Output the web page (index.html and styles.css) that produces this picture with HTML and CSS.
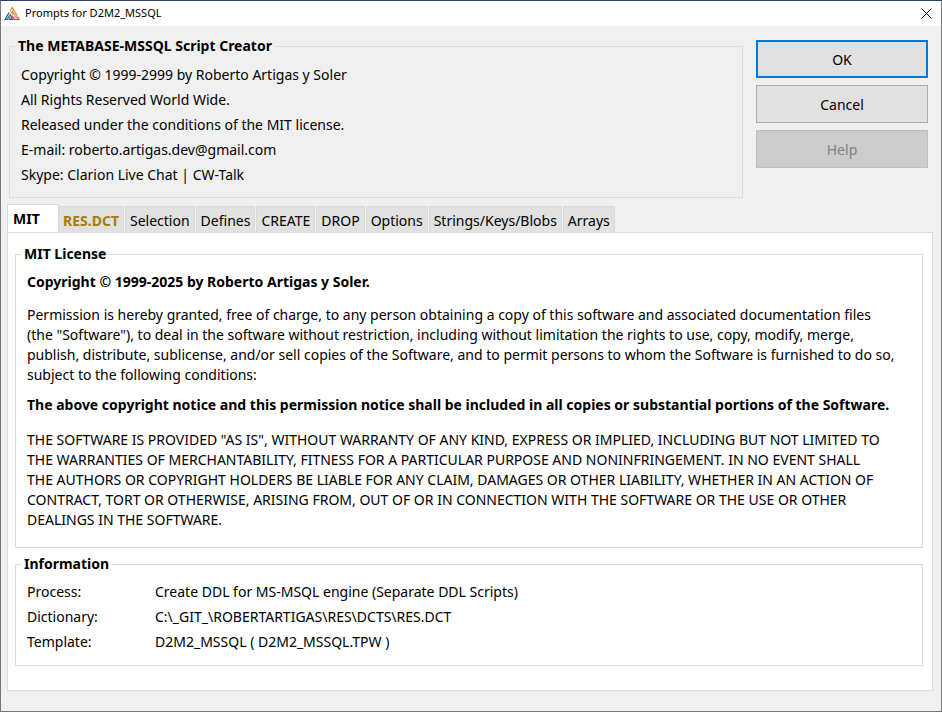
FILE: index.html
```html
<!DOCTYPE html>
<html lang="en">
<head>
<meta charset="utf-8">
<title>Prompts for D2M2_MSSQL</title>
<link rel="stylesheet" href="styles.css">
</head>
<body>
<div class="window">
  <header class="titlebar">
    <svg class="logo" viewBox="0 0 16 16" aria-hidden="true">
      <path class="logo-orange" d="M6 5.2 8.2 1.5 12.8 9H10.6L8.4 5.2 7.2 7.2M8 7.6H9.4"/>
      <path class="logo-blue" d="M5.2 6.4 1 13.4H3.2L5.6 9.2M6 8 8.6 13.4H5.2L6.2 11.2"/>
      <path class="logo-red" d="M8.2 9.6 10.2 13.4H15L13.6 11H10.4"/>
    </svg>
    <h1 class="title">Prompts for D2M2_MSSQL</h1>
    <button class="close" type="button" aria-label="Close">
      <svg class="close-icon" viewBox="0 0 11 11" aria-hidden="true"><path d="M.5.5 10.5 10.5M10.5.5.5 10.5"/></svg>
    </button>
  </header>
  <main class="body">
    <div class="top">
      <fieldset class="group about">
        <legend>The METABASE-MSSQL Script Creator</legend>
        <p>Copyright © 1999-2999 by Roberto Artigas y Soler</p>
        <p>All Rights Reserved World Wide.</p>
        <p>Released under the conditions of the MIT license.</p>
        <p>E-mail: roberto.artigas.dev@gmail.com</p>
        <p>Skype: Clarion Live Chat | CW-Talk</p>
      </fieldset>
      <div class="actions">
        <button class="action primary" type="button">OK</button>
        <button class="action" type="button">Cancel</button>
        <button class="action" type="button" disabled>Help</button>
      </div>
    </div>
    <div class="tabs" role="tablist">
      <button class="tab active" id="tab-mit" type="button" role="tab" aria-selected="true" aria-controls="panel-mit">MIT</button>
      <button class="tab marked" type="button" role="tab" aria-selected="false">RES.DCT</button>
      <button class="tab" type="button" role="tab" aria-selected="false">Selection</button>
      <button class="tab" type="button" role="tab" aria-selected="false">Defines</button>
      <button class="tab" type="button" role="tab" aria-selected="false">CREATE</button>
      <button class="tab" type="button" role="tab" aria-selected="false">DROP</button>
      <button class="tab" type="button" role="tab" aria-selected="false">Options</button>
      <button class="tab" type="button" role="tab" aria-selected="false">Strings/Keys/Blobs</button>
      <button class="tab" type="button" role="tab" aria-selected="false">Arrays</button>
    </div>
    <section class="panel" id="panel-mit" role="tabpanel" aria-labelledby="tab-mit">
      <fieldset class="group license">
        <legend>MIT License</legend>
        <p class="strong">Copyright © 1999-2025 by Roberto Artigas y Soler.</p>
        <p>Permission is hereby granted, free of charge, to any person obtaining a copy of this software and associated documentation files<br>
        (the "Software"), to deal in the software without restriction, including without limitation the rights to use, copy, modify, merge,<br>
        publish, distribute, sublicense, and/or sell copies of the Software, and to permit persons to whom the Software is furnished to do so,<br>
        subject to the following conditions:</p>
        <p class="strong notice">The above copyright notice and this permission notice shall be included in all copies or substantial portions of the Software.</p>
        <p>THE SOFTWARE IS PROVIDED "AS IS", WITHOUT WARRANTY OF ANY KIND, EXPRESS OR IMPLIED, INCLUDING BUT NOT LIMITED TO<br>
        THE WARRANTIES OF MERCHANTABILITY, FITNESS FOR A PARTICULAR PURPOSE AND NONINFRINGEMENT. IN NO EVENT SHALL<br>
        THE AUTHORS OR COPYRIGHT HOLDERS BE LIABLE FOR ANY CLAIM, DAMAGES OR OTHER LIABILITY, WHETHER IN AN ACTION OF<br>
        CONTRACT, TORT OR OTHERWISE, ARISING FROM, OUT OF OR IN CONNECTION WITH THE SOFTWARE OR THE USE OR OTHER<br>
        DEALINGS IN THE SOFTWARE.</p>
      </fieldset>
      <fieldset class="group">
        <legend>Information</legend>
        <dl class="info">
          <dt>Process:</dt><dd>Create DDL for MS-MSQL engine (Separate DDL Scripts)</dd>
          <dt>Dictionary:</dt><dd>C:\_GIT_\ROBERTARTIGAS\RES\DCTS\RES.DCT</dd>
          <dt>Template:</dt><dd>D2M2_MSSQL ( D2M2_MSSQL.TPW )</dd>
        </dl>
      </fieldset>
    </section>
  </main>
</div>
</body>
</html>
```
FILE: styles.css
```css
* {
  box-sizing: border-box;
}

body {
  margin: 0;
  color: #000;
  font: 14px/20px "Noto Sans", "Open Sans", sans-serif;
}

p, dl, dd, h1 {
  margin: 0;
}

button {
  font: inherit;
  color: inherit;
}

.window {
  display: flex;
  flex-direction: column;
  min-height: 100vh;
  background: #f0f0f0;
  border: 1px solid #767676;
  border-top-color: #2b4263;
}

.titlebar {
  display: flex;
  align-items: center;
  height: 25px;
  padding-left: 3px;
  background: #fff;
}

.logo {
  width: 16px;
  height: 16px;
  margin-right: 5px;
  fill: none;
  stroke-width: 1.2;
}

.logo-orange { stroke: #e08a2c; }
.logo-blue { stroke: #2a5f92; }
.logo-red { stroke: #e0452c; }

.title {
  flex: 1;
  font-size: 11px;
  line-height: 18px;
  padding-bottom: 2px;
  font-weight: 400;
}

.close {
  display: flex;
  align-items: center;
  justify-content: center;
  width: 29px;
  height: 25px;
  padding: 0;
  border: 0;
  background: none;
}

.close-icon {
  width: 11px;
  height: 11px;
  fill: none;
  stroke: #000;
}

.body {
  flex: 1;
  display: flex;
  flex-direction: column;
  padding: 10px 8px 20px 6px;
}

.top {
  display: flex;
  align-items: flex-start;
  gap: 13px;
  padding: 0 5px 0 2px;
}

.group {
  min-width: 0;
  margin: 0;
  padding: 5px 11px 11px;
  border: 1px solid #dcdcdc;
}

.group legend {
  margin-left: -6px;
  padding: 0 3px;
  font-weight: 700;
}

.about {
  flex: 1;
  padding: 6px 11px 10px;
  line-height: 25px;
}

.about legend {
  line-height: 20px;
}

.actions {
  display: flex;
  flex-direction: column;
  gap: 7px;
  width: 172px;
  padding-top: 4px;
}

.action {
  height: 38px;
  padding: 1px 0 0;
  border: 1px solid #adadad;
  background: #e1e1e1;
}

.action.primary {
  border: 2px solid #0078d7;
}

.action:disabled {
  border-color: #bfbfbf;
  background: #ccc;
  color: #838383;
}

.tabs {
  display: flex;
  align-items: flex-end;
  gap: 1px;
  margin-top: 6px;
}

.tab {
  height: 26px;
  padding: 2px 4px 0;
  border: 1px solid #d9d9d9;
  border-bottom: 0;
  border-radius: 2px 2px 0 0;
  background: #e1e1e1;
}

.tab.active {
  width: 52px;
  height: 29px;
  margin: 0 -1px -1px 0;
  padding: 0 5px;
  border-radius: 0;
  background: #fff;
  font-weight: 700;
  text-align: left;
}

.tab.marked {
  border-left: 0;
  color: #a67c0c;
  font-weight: 700;
}

.panel {
  flex: 1;
  padding: 11px 9px 24px 7px;
  border: 1px solid #dcdcdc;
  background: #fff;
}

.license {
  padding: 8px 11px 17px;
  margin-bottom: 6px;
}

.license p {
  margin-top: 13px;
  white-space: nowrap;
}

.license .strong {
  margin: 0;
  font-weight: 700;
}

.license .notice {
  margin: 10px 0 15px;
}

.info {
  display: grid;
  grid-template-columns: 128px 1fr;
  line-height: 25px;
}
```
